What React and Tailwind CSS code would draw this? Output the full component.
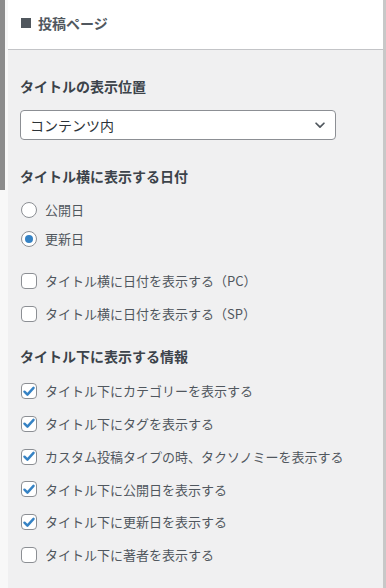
const font = { fontFamily: '"Noto Sans CJK JP", "Noto Sans", sans-serif' };

function Check({ on }) {
  return (
    <span className="flex h-[16px] w-[16px] shrink-0 items-center justify-center rounded-[4px] border border-[#8c8f94] bg-white">
      {on && (
        <svg viewBox="0 0 16 16" className="h-[15px] w-[15px]">
          <path d="M2.8 8.2 L6.2 11.6 L13.2 3.8" fill="none" stroke="#3582c4" strokeWidth="2.8" strokeLinecap="round" strokeLinejoin="round" />
        </svg>
      )}
    </span>
  );
}

function Radio({ on }) {
  return (
    <span className="flex h-[16px] w-[16px] shrink-0 items-center justify-center rounded-full border border-[#8c8f94] bg-white">
      {on && <span className="h-[8px] w-[8px] rounded-full bg-[#3582c4]" />}
    </span>
  );
}

function Row({ children, label, className = "" }) {
  return (
    <div className={"flex h-[20px] items-center gap-[8px] text-[13px] text-[#50575e] " + className}>
      {children}
      <span>{label}</span>
    </div>
  );
}

function Heading({ children, className = "" }) {
  return <div className={"h-[20px] text-[14px] font-bold leading-[20px] text-[#3c434a] " + className}>{children}</div>;
}

export default function App() {
  const below = [
    ["タイトル下にカテゴリーを表示する", true],
    ["タイトル下にタグを表示する", true],
    ["カスタム投稿タイプの時、タクソノミーを表示する", true],
    ["タイトル下に公開日を表示する", true],
    ["タイトル下に更新日を表示する", true],
    ["タイトル下に著者を表示する", false],
  ];

  return (
    <div className="flex h-[588px] w-[386px] bg-[#f8f8f8]" style={font}>
      <div className="w-[8px] shrink-0">
        <div className="h-[190px] w-[5px] bg-[#8c8c8c]" />
      </div>

      <div className="flex flex-1 flex-col">
        <div className="flex h-[50px] items-center border-b border-[#c3c4c7] bg-white pb-[3px] pl-[13px] text-[14px] font-bold text-[#50575e]">
          <span className="mr-[7px] h-[10px] w-[10px] bg-[#50575e]" />
          <span>投稿ページ</span>
        </div>

        <div className="flex-1 bg-[#f0f0f1] px-[12px] pt-[26px]">
          <Heading>タイトルの表示位置</Heading>
          <div className="mt-[14px] flex h-[30px] w-[316px] items-center justify-between rounded-[4px] border border-[#8c8f94] bg-white pl-[9px] pr-[8px] text-[14px] text-[#2c3338]">
            <span>コンテンツ内</span>
            <svg viewBox="0 0 16 16" className="h-[14px] w-[14px]">
              <path d="M3.5 6 L8 10.5 L12.5 6" fill="none" stroke="#50575e" strokeWidth="2" strokeLinecap="round" strokeLinejoin="round" />
            </svg>
          </div>

          <Heading className="mt-[26px]">タイトル横に表示する日付</Heading>
          <Row label="公開日" className="mt-[14px] pl-[1px]">
            <Radio on={false} />
          </Row>
          <Row label="更新日" className="mt-[9px] pl-[1px]">
            <Radio on />
          </Row>
          <Row label="タイトル横に日付を表示する（PC）" className="mt-[22px] pl-[1px]">
            <Check on={false} />
          </Row>
          <Row label="タイトル横に日付を表示する（SP）" className="mt-[13px] pl-[1px]">
            <Check on={false} />
          </Row>

          <Heading className="mt-[22px]">タイトル下に表示する情報</Heading>
          <div className="mt-[15px] flex flex-col gap-[12.8px]">
            {below.map(([label, on]) => (
              <Row key={label} label={label} className="pl-[1px]">
                <Check on={on} />
              </Row>
            ))}
          </div>
        </div>
      </div>

      <div className="w-[3px] shrink-0 bg-[#c8c8c8]" />
    </div>
  );
}
